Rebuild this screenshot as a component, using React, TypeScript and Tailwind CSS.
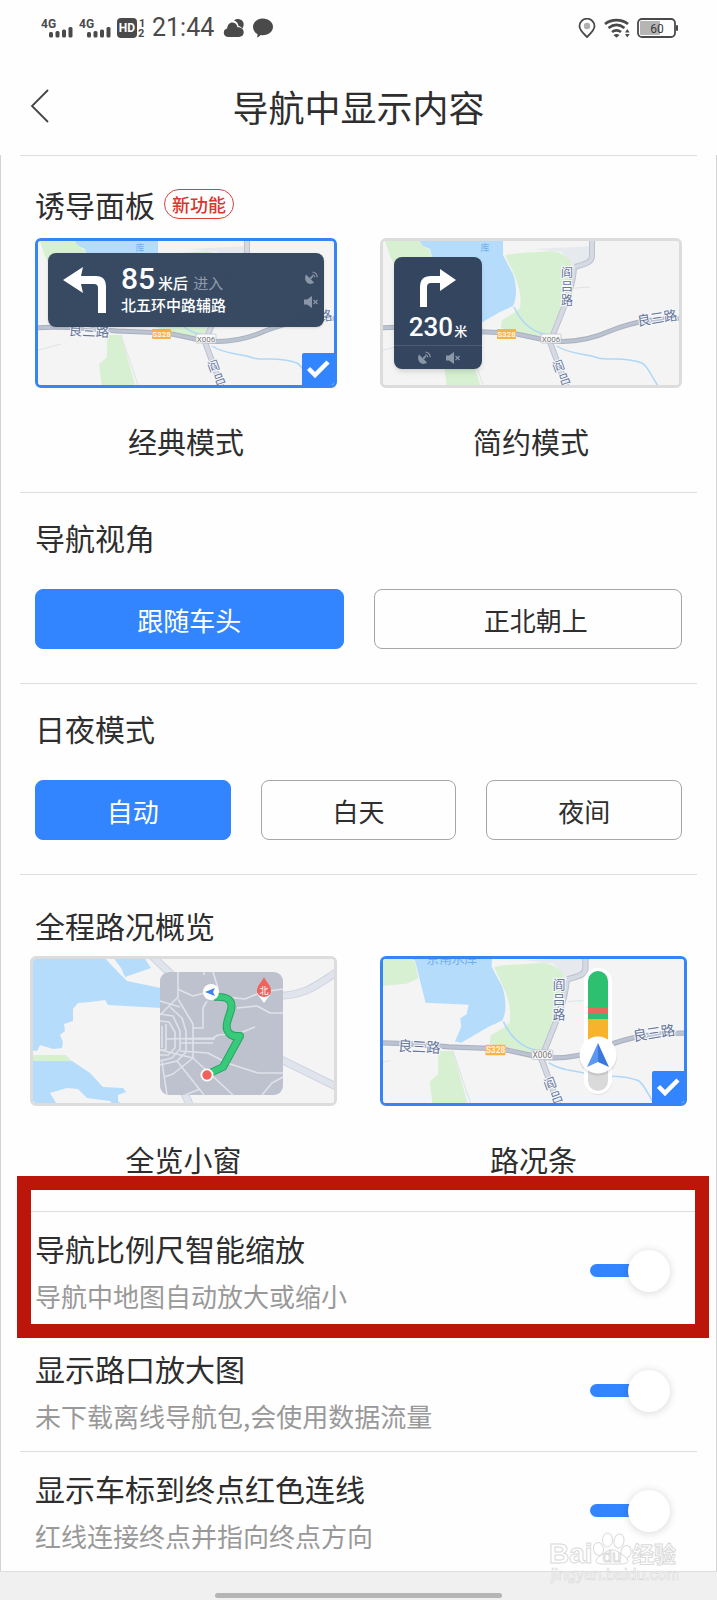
import { useState } from 'react';
import type { ReactNode } from 'react';
import clsx from 'clsx';

const MAP_LABEL = {
    fill:       '#66759a',
    stroke:     '#f7f8fa',
    paintOrder: 'stroke',
    textAnchor: 'middle',
    dominantBaseline: 'central',
} as const;

function SignalIcon() {
    return (
        <svg viewBox="0 0 32 22" className="h-[22px] w-8" fill="#4a4a4a" aria-hidden>
            <text x="0" y="11" fontSize="12" fontWeight="700" fontFamily="Roboto, sans-serif">4G</text>
            <rect x="8" y="15" width="4" height="5.500" rx="1.500" />
            <rect x="14.500" y="14" width="4" height="6.500" rx="1.500" />
            <rect x="21" y="12.500" width="4" height="8" rx="1.500" />
            <rect x="27.500" y="10" width="4" height="10.500" rx="1.500" />
        </svg>
    );
}

function StatusBar() {
    return (
        <div className="flex h-14 items-center justify-between pl-[41px] pr-[38px] text-[#4a4a4a]">
            <div className="flex items-center">
                <SignalIcon />
                <span className="w-1.5" />
                <SignalIcon />
                <svg viewBox="0 0 30 22" className="ml-[6px] h-[22px] w-[30px]" fill="#4a4a4a" aria-hidden>
                    <rect x="0" y="1" width="20" height="20" rx="4" />
                    <text x="10" y="15" fontSize="12" fontWeight="700" fill="#fff" textAnchor="middle" fontFamily="Roboto, sans-serif">HD</text>
                    <text x="22" y="10" fontSize="11" fontWeight="700" fontFamily="Roboto, sans-serif">1</text>
                    <text x="21" y="20" fontSize="11" fontWeight="700" fontFamily="Roboto, sans-serif">2</text>
                </svg>
                <span className="ml-[5px] font-[Roboto,sans-serif] text-[25px] leading-7">21:44</span>
                <svg viewBox="0 0 22 20" className="ml-[9px] h-5 w-[22px]" fill="#4a4a4a" aria-hidden>
                    <path d="M11 2.500C13.500-.3 19.500.8 20.500 5c.5 2.500-.3 4.500-1.300 5.500-.9-1.500-2.200-2.300-3.700-2.500C15 5 13.500 3.200 11 2.500z" />
                    <path d="M5.500 19C2.500 19 .8 17.200.8 14.800c0-2.300 1.500-3.900 3.400-4.200C4.300 7 6.500 4.500 9.300 4.500c2.700 0 4.700 1.800 5.200 4.800 3.600-.3 6.200 1.900 6.200 5 0 2.800-2 4.700-4.700 4.700z" />
                </svg>
                <svg viewBox="0 0 22 20" className="ml-[7px] h-5 w-[22px]" fill="#4a4a4a" aria-hidden>
                    <path d="M11 .5c5.600 0 10 3.700 10 8.300s-4.400 8.400-10 8.400c-.9 0-1.600-.1-2.400-.2-.8 1.200-2 2-3.600 2.400.5-1 .6-2.200.3-3.300C2.700 14.500 1 11.900 1 8.800 1 4.200 5.400.5 11 .5z" />
                </svg>
            </div>
            <div className="flex items-center">
                <svg viewBox="0 0 18 20" className="h-5 w-[18px]" fill="none" aria-hidden>
                    <path d="M9 19C5 15 1.500 12 1.500 8.200a7.500 7.500 0 0 1 15 0C16.500 12 13 15 9 19z" stroke="#4a4a4a" strokeWidth="1.800" />
                    <circle cx="9" cy="8" r="3.200" fill="#b0b0b0" />
                </svg>
                <svg viewBox="0 0 26 20" className="ml-2 h-5 w-[26px]" fill="none" stroke="#4a4a4a" strokeWidth="2.700" aria-hidden>
                    <path d="M1 6C7.500.9 17.500.9 24 6" />
                    <path d="M4.500 10c5-3.800 11-3.800 16 0" />
                    <path d="M8 14c3-2.300 6-2.300 9 0" />
                    <path d="M9.500 17c1.500-1.300 4.500-1.300 6 0l-3 2.700z" fill="#4a4a4a" stroke="none" />
                    <path d="M21 14.500l2.300-3.500 2.300 3.500zM21 16l2.300 3.500 2.300-3.500z" fill="#4a4a4a" stroke="none" />
                </svg>
                <svg viewBox="0 0 42 20" className="ml-[7px] h-5 w-[42px]" aria-hidden>
                    <rect x="3" y="3" width="20" height="14" rx="1" fill="#b5b5b5" />
                    <rect x="1" y="1" width="37" height="18" rx="4" fill="none" stroke="#4a4a4a" strokeWidth="1.800" />
                    <rect x="39" y="7" width="2" height="6" rx="1" fill="#4a4a4a" />
                    <text x="20" y="14.500" fontSize="12" fill="#3a3a3a" textAnchor="middle" fontFamily="Roboto, sans-serif">60</text>
                </svg>
            </div>
        </div>
    );
}

interface StreetMapProps {
    close?:    boolean;
    covered?:  boolean;
    children?: ReactNode;
}

// Street map shared by three of the previews. `close` is the slightly enlarged crop,
// `covered` leaves out the labels that a wide panel hides.
function StreetMap({ close, covered, children }: StreetMapProps) {
    return (
        <svg
            viewBox={close ? '3 3 301 144' : '3 3 296 144'}
            preserveAspectRatio="none"
            className="block h-full w-full"
            fontFamily="'Noto Sans CJK SC', sans-serif"
            aria-hidden
        >
            <rect width="310" height="150" fill="#f4f4f4" />
            <g transform={close ? 'matrix(1.052 0 0 1.052 -17.600 -7)' : undefined}>
                <path d="M4 0H41L43 8 50 12 53 28 42 33 18 35 10 18z" fill="#d7f0d1" />
                <path d="M38 0 43 8 50 11 60 51 101 53 99 62 93 66 94 74 88 88 94 89 120 74 133 68C137 60 137 48 133 36L123 17V0z" fill="#b6dcfc" />
                <path d="M154 11 213 8 207 26 194 30 182 14z" fill="#e6e9ee" />
                <path d="M125 17C140 14 156 15 169 13c8 0 18 4 22 11 2 12 0 24-6 36L170 95 158 99 121 90 122 82 134 75 140 70C143 50 132 32 125 17z" fill="#d7f0d1" />
                <path d="M72 97H86L101 150H67L64 126 72 119z" fill="#d7f0d1" />
                <path d="M86 97 104 150M0 113 26 106M195 50 210 49" fill="none" stroke="#dfe1e6" strokeWidth="1" />
                <path d="M134 69C140 82 150 94 168 97M177 108C190 117 206 115 218 120c14 3 24-2 44 5 6 3 9 13 18 26" fill="none" stroke="#aed7f8" strokeWidth="1.500" />
                <g fill="none" stroke="#bcc2cf" strokeWidth="6">
                    <path d="M212 0V18C212 25 204 26 195 29" />
                    <path d="M194 30C193 52 180 78 170 104L187 150" />
                </g>
                <g fill="none" stroke="#d5d9e2" strokeWidth="4">
                    <path d="M212 0V18C212 25 204 26 195 29" />
                    <path d="M194 30C193 52 180 78 170 104L187 150" />
                </g>
                <path d="M0 90C20 88 45 90 82 93L132 95 165 102C190 106 212 101 230 93 255 83 275 80 310 80" fill="none" stroke="#a9b1c1" strokeWidth="5" />
                <path d="M0 90C20 88 45 90 82 93L132 95 165 102C190 106 212 101 230 93 255 83 275 80 310 80" fill="none" stroke="#bcc3d0" strokeWidth="3" />
                <rect x="117" y="91" width="19" height="10" rx="1" fill="#f8b24c" />
                <text x="126.500" y="99" fontSize="8" fontWeight="700" fill="#fff3df" textAnchor="middle" fontFamily="Roboto, sans-serif">S328</text>
                <rect x="161" y="96" width="20" height="9" rx="1" fill="#fafafa" stroke="#b9bdc9" strokeWidth=".7" />
                <text x="171" y="103.500" fontSize="8" fill="#777" textAnchor="middle" fontFamily="Roboto, sans-serif">X006</text>
                <g {...MAP_LABEL} strokeWidth="2" fontSize="12">
                    {!covered && (
                        <>
                            <text x="187" y="33">阎</text>
                            <text x="187" y="47">吕</text>
                            <text x="187" y="61">路</text>
                        </>
                    )}
                    <text x="178" y="127" transform="rotate(-20 178 127)">阎</text>
                    <text x="184" y="140" transform="rotate(-20 184 140)">吕</text>
                </g>
                <g {...MAP_LABEL} strokeWidth="2" fontSize="13.500">
                    <text x="54" y="92" transform="rotate(3 54 92)">良三路</text>
                    <text x="277" y="79" transform="rotate(-9 277 79)">良三路</text>
                </g>
                {close
                    ? <text x="85" y="13" fontSize="12" fill="#6fb0ea" textAnchor="middle">京南水库</text>
                    : <text x="105" y="13" fontSize="9" fill="#6fb0ea" textAnchor="middle">库</text>}
            </g>
            {children}
        </svg>
    );
}

function TrafficBar() {
    return (
        <g>
            <rect x="205" y="13" width="27" height="126" rx="13.500" fill="#000" opacity=".08" />
            <rect x="204" y="12" width="28" height="126" rx="14" fill="#fff" />
            <path d="M208 25a10 10 0 0 1 20 0V63H208z" fill="#2cc070" />
            <path d="M208 51H228V57H208z" fill="#e8685b" />
            <path d="M208 63H228V98H208z" fill="#f7b32b" />
            <path d="M208 112H228V125a10 10 0 0 1-20 0z" fill="#dadada" />
            <circle cx="218" cy="101" r="19" fill="#000" opacity=".08" />
            <circle cx="218" cy="99" r="18.500" fill="#fff" />
            <path d="M218 87 207 111 218 106z" fill="#5c97f0" />
            <path d="M218 87 229 111 218 106z" fill="#3b78de" />
        </g>
    );
}

function OverviewMap() {
    return (
        <svg viewBox="3 3 301 144" preserveAspectRatio="none" className="block h-full w-full" aria-hidden>
            <rect width="307" height="150" fill="#f4f4f4" />
            <path d="M0 0H73L87 15 97 25 131 32V52L78 49 75 44 60 46 48 47 43 53V65L34 68 35 75 30 79 33 86 32 92 23 93 10 89 7 95 0 94z" fill="#b6dcfc" />
            <path d="M82 0H113L121 12 95 21 91 12z" fill="#b6dcfc" />
            <path d="M0 99H36L42 105H0z" fill="#d7f0d1" />
            <path d="M0 105H42L60 117 73 131 93 132 96 136 88 139V145L93 150H84L80 145 57 142 48 133 37 132 20 137 28 150H0z" fill="#b6dcfc" />
            <g fill="none" stroke="#ced3df" strokeWidth="8">
                <path d="M122 0 145 22M248 40C276 39 285 30 307 16M248 102 307 131M153 134 162 154" />
            </g>
            <g fill="none" stroke="#e0e4ec" strokeWidth="6">
                <path d="M122 0 145 22M248 40C276 39 285 30 307 16M248 102 307 131M153 134 162 154" />
            </g>
            <rect x="130" y="16" width="123" height="123" rx="9" fill="#bec2ce" />
            <g fill="none" stroke="#dfe2e9" strokeWidth="1.600" strokeLinejoin="round">
                <path d="M148 16V41L130 59M148 33 154 36 163 40 182 35M183 16 188 32M174 16V19" />
                <path d="M148 43 163 68V102M130 45 150 51M140 51 152 62 156 75V96L147 105 130 109" />
                <path d="M163 72H173V52L177 45M130 58 143 60 150 75V93L142 102 130 105" />
                <path d="M130 65 139 66 145 76V92L138 99 130 99M136 68V94H130M132 70V92" />
                <path d="M137 83 183 82 188 79 210 77 225 71M150 87H183M156 83H185" />
                <path d="M150 95 178 97 197 107 228 117H253M163 102 203 139M147 105 174 139M132 106 137 139" />
                <path d="M134 121 143 118 163 102M253 121 242 127 232 139M155 139 170 133" />
                <path d="M188 40 215 43 232 36 253 33M207 52 227 50 240 57H253M130 94 163 102" />
            </g>
            <path d="M184 41C199 40 203 45 201 54 198 64 194 71 199 77 202 81 205 80 210 80L193 111 178 118" fill="none" stroke="#27a35f" strokeWidth="8" strokeLinejoin="round" />
            <path d="M184 41C199 40 203 45 201 54 198 64 194 71 199 77 202 81 205 80 210 80L193 111 178 118" fill="none" stroke="#36ca7a" strokeWidth="6" strokeLinejoin="round" />
            <circle cx="181" cy="36" r="8" fill="#fff" />
            <path d="M175 36 185 32 183 36 185 40z" fill="#3f80f0" />
            <circle cx="177" cy="119" r="6.500" fill="#fff" />
            <circle cx="177" cy="119" r="4.700" fill="#f0625c" />
            <path d="M228 39 234 47 240 39z" fill="#fff" />
            <path d="M234 21C236 26 241 29 241 35a7 6 0 0 1-14 0C227 29 232 26 234 21z" fill="#f0625c" />
            <text x="234" y="38" fontSize="9" fill="#fff" textAnchor="middle" fontFamily="'Noto Sans CJK SC', sans-serif">北</text>
        </svg>
    );
}

function SatelliteIcon() {
    return (
        <svg viewBox="0 0 14 14" className="h-3.5 w-3.5" fill="#8b96a6" aria-hidden>
            <path d="M2 3.500 10 11.500C7.500 13.600 4.500 13.300 2.700 11.300.9 9.300.5 6 2 3.500z" />
            <path d="M5.500 7 8.500 4.300 9.500 5.300 7 8.500z" />
            <path d="M8.500 3.500a3 3 0 0 1 2.300 2.800M8.500 1a5.500 5.500 0 0 1 4.700 5.300" fill="none" stroke="#8b96a6" strokeWidth="1.200" />
        </svg>
    );
}

function MuteIcon() {
    return (
        <svg viewBox="0 0 14 14" className="h-3.5 w-3.5" fill="#8b96a6" aria-hidden>
            <path d="M0 4.500H3L8 1V13L3 9.500H0z" />
            <path d="M9.500 5 13.500 9M13.500 5 9.500 9" stroke="#8b96a6" strokeWidth="1.200" />
        </svg>
    );
}

function ClassicPreview() {
    return (
        <>
            <StreetMap covered />
            <div className="absolute inset-x-[10px] top-[12px] flex h-[74px] items-center rounded-lg bg-[#34465f]/98 pl-[15px] pr-[6px] text-white shadow">
                <svg viewBox="0 0 44 46" className="h-[46px] w-11 shrink-0" aria-hidden>
                    <path d="M0 13 20 0 18 9H33Q43 9 43 20V46H35V21Q35 17 31 17H18L20 26z" fill="#fff" />
                </svg>
                <div className="ml-[14px] flex-1 text-left">
                    <div className="flex items-baseline leading-[26px]">
                        <span className="font-[Roboto,sans-serif] text-[30px] font-medium">85</span>
                        <span className="ml-[3px] text-[15px] font-medium">米后</span>
                        <span className="ml-[5px] text-[15px] text-[#8f9bad]">进入</span>
                    </div>
                    <div className="text-[15px] font-medium leading-[18px]">北五环中路辅路</div>
                </div>
                <div className="flex flex-col gap-[10px]">
                    <SatelliteIcon />
                    <MuteIcon />
                </div>
            </div>
        </>
    );
}

function SimplePreview() {
    return (
        <>
            <StreetMap />
            <div className="absolute left-[11px] top-[16px] flex w-[88px] flex-col items-center rounded-lg bg-[#34465f] text-white shadow-md">
                <svg viewBox="0 0 38 38" className="mt-3 h-[38px] w-[38px]" aria-hidden>
                    <path d="M37 11 21 0V7H12Q1 7 1 18V38H8V18Q8 14 12 14H21V22z" fill="#fff" />
                </svg>
                <div className="mt-[6px] flex h-8 items-baseline leading-7">
                    <span className="font-[Roboto,sans-serif] text-[26px] font-medium">230</span>
                    <span className="ml-px text-[13px] font-medium">米</span>
                </div>
                <div className="flex h-6 w-full items-center justify-center gap-[15px] border-t border-[#4c5c73]">
                    <SatelliteIcon />
                    <MuteIcon />
                </div>
            </div>
        </>
    );
}

interface PreviewCardProps {
    label:    string;
    selected: boolean;
    onSelect: () => void;
    children: ReactNode;
}

function PreviewCard({ label, selected, onSelect, children }: PreviewCardProps) {
    return (
        <button type="button" aria-pressed={selected} onClick={onSelect} className="flex-1">
            <span
                className={clsx(
                    'relative block h-[150px] overflow-hidden rounded-md border-[3px]',
                    selected ? 'border-[#3585f5]' : 'border-[#dcdcdc]',
                )}
            >
                {children}
                {selected && (
                    <span className="absolute bottom-0 right-0 flex h-8 w-8 items-center justify-center rounded-tl-xs bg-[#3385ff]">
                        <svg viewBox="0 0 24 20" className="h-5 w-6" aria-hidden>
                            <path d="M2.500 9.500 9 16 22 3" fill="none" stroke="#fff" strokeWidth="4.500" />
                        </svg>
                    </span>
                )}
            </span>
            <span className="mt-[33px] block text-[29px] leading-10">{label}</span>
        </button>
    );
}

interface Option {
    label:      string;
    className?: string;
}

function OptionRow({ options, value, onChange }: { options: Option[]; value: string; onChange: (v: string) => void }) {
    return (
        <div className="mt-8 grid auto-cols-fr grid-flow-col gap-[30px]">
            {options.map(o => (
                <button
                    key={o.label}
                    type="button"
                    aria-pressed={o.label === value}
                    onClick={() => onChange(o.label)}
                    className={clsx(
                        'h-[60px] rounded-lg border text-[26px]',
                        o.label === value ? 'border-[#3385ff] bg-[#3385ff] text-white' : 'border-[#a6a6a6]',
                        o.className,
                    )}
                >
                    {o.label}
                </button>
            ))}
        </div>
    );
}

interface SwitchRowProps {
    title:        string;
    hint:         string;
    highlighted?: boolean;
}

function SwitchRow({ title, hint, highlighted }: SwitchRowProps) {
    const [on, setOn] = useState(true);

    return (
        <label className="relative mx-[19px] flex items-center justify-between border-t border-[#dedede] pl-[15px] pr-[27px]">
            <span className="block pb-[17px] pt-4">
                <span className="block text-[30px] leading-10">{title}</span>
                <span className="mt-[10px] block text-[26px] leading-9 text-[#999]">{hint}</span>
            </span>
            <input type="checkbox" role="switch" checked={on} onChange={e => setOn(e.target.checked)} className="sr-only" />
            <span className={clsx('flex w-20 items-center pb-0.5', !on && 'flex-row-reverse')}>
                <span className={clsx('h-[13px] flex-1 rounded-full', on ? '-mr-3 bg-[#3385ff]' : '-ml-3 bg-[#ccc]')} />
                <span className="relative h-[42px] w-[42px] rounded-full bg-white shadow-[0_1px_8px_rgba(0,0,0,0.16)]" />
            </span>
            {highlighted && (
                <span className="pointer-events-none absolute -bottom-[7px] -left-[3px] -right-3 -top-9 z-10 border-[14px] border-[#bb1609]" aria-hidden />
            )}
        </label>
    );
}

function Watermark() {
    return (
        <svg
            viewBox="0 0 130 64"
            className="pointer-events-none absolute bottom-[15px] right-[38px] h-16 w-[130px]"
            fill="#fff"
            stroke="#dadada"
            strokeWidth="1"
            fontFamily="'Liberation Sans', sans-serif"
            aria-hidden
        >
            <text x="0" y="42" fontSize="28" fontWeight="700">Bai</text>
            <ellipse cx="49.500" cy="28" rx="5" ry="6.500" transform="rotate(-12 49.500 28)" />
            <ellipse cx="58.500" cy="19" rx="5" ry="7" />
            <ellipse cx="70" cy="20" rx="5" ry="7" transform="rotate(10 70 20)" />
            <ellipse cx="77" cy="31" rx="5" ry="6.500" transform="rotate(15 77 31)" />
            <path d="M63 29C58 29 56 32 51 35 45 39 46 43 54 43H72C80 43 81 39 75 35 70 32 68 29 63 29z" />
            <text x="63" y="41" fontSize="17" textAnchor="middle">du</text>
            <text x="83" y="41" fontSize="22" fontWeight="700" fontFamily="'Noto Sans CJK SC', sans-serif">经验</text>
            <text x="2" y="59" fontSize="16" strokeWidth=".7">jingyan.baidu.com</text>
        </svg>
    );
}

export default function App() {
    const [panel, setPanel]       = useState('经典模式');
    const [angle, setAngle]       = useState('跟随车头');
    const [theme, setTheme]       = useState('自动');
    const [overview, setOverview] = useState('路况条');

    return (
        <div className="relative bg-[#fefefe] font-['Noto_Sans_CJK_SC',sans-serif] text-[#2e2e2e]">
            <StatusBar />

            <header className="flex h-[99px] items-center px-[30px]">
                <button type="button" aria-label="返回" className="w-5">
                    <svg viewBox="0 0 20 36" className="h-9 w-5" aria-hidden>
                        <path d="M18 2 2 18 18 34" fill="none" stroke="#444" strokeWidth="1.800" />
                    </svg>
                </button>
                <h1 className="flex-1 pr-5 text-center text-[36px] leading-[48px]">导航中显示内容</h1>
            </header>

            <main className="border-x border-[#d4d4d4]">
                <section className="mx-[19px] border-t border-[#dedede] px-[15px] pb-[31px] pt-7">
                    <div className="flex items-center">
                        <h2 className="text-[30px] leading-10">诱导面板</h2>
                        <span className="ml-[9px] rounded-full border border-[#d9423a] px-[7px] text-[18px] font-medium leading-7 text-[#d9362e]">新功能</span>
                    </div>
                    <div className="mt-[14px] flex gap-[43px]">
                        <PreviewCard label="经典模式" selected={panel === '经典模式'} onSelect={() => setPanel('经典模式')}>
                            <ClassicPreview />
                        </PreviewCard>
                        <PreviewCard label="简约模式" selected={panel === '简约模式'} onSelect={() => setPanel('简约模式')}>
                            <SimplePreview />
                        </PreviewCard>
                    </div>
                </section>

                <section className="mx-[19px] border-t border-[#dedede] px-[15px] pb-[34px] pt-6">
                    <h2 className="text-[30px] leading-10">导航视角</h2>
                    <OptionRow
                        options={[{ label: '跟随车头' }, { label: '正北朝上', className: 'pl-4' }]}
                        value={angle}
                        onChange={setAngle}
                    />
                </section>

                <section className="mx-[19px] border-t border-[#dedede] px-[15px] pb-[34px] pt-6">
                    <h2 className="text-[30px] leading-10">日夜模式</h2>
                    <OptionRow
                        options={[{ label: '自动' }, { label: '白天' }, { label: '夜间' }]}
                        value={theme}
                        onChange={setTheme}
                    />
                </section>

                <section className="mx-[19px] border-t border-[#dedede] px-[10px] pb-8 pt-[30px]">
                    <h2 className="px-[5px] text-[30px] leading-10">全程路况概览</h2>
                    <div className="mt-[11px] flex gap-[43px]">
                        <PreviewCard label="全览小窗" selected={overview === '全览小窗'} onSelect={() => setOverview('全览小窗')}>
                            <OverviewMap />
                        </PreviewCard>
                        <PreviewCard label="路况条" selected={overview === '路况条'} onSelect={() => setOverview('路况条')}>
                            <StreetMap close>
                                <TrafficBar />
                            </StreetMap>
                        </PreviewCard>
                    </div>
                </section>

                <SwitchRow title="导航比例尺智能缩放" hint="导航中地图自动放大或缩小" highlighted />
                <SwitchRow title="显示路口放大图" hint="未下载离线导航包,会使用数据流量" />
                <SwitchRow title="显示车标到终点红色连线" hint="红线连接终点并指向终点方向" />
            </main>

            <footer className="flex h-[29px] justify-center border-t border-[#dedede] bg-[#f0f0f0] pt-[21px]">
                <span className="h-[5px] w-2/5 rounded-full bg-[#b5b5b5]" />
            </footer>

            <Watermark />
        </div>
    );
}
